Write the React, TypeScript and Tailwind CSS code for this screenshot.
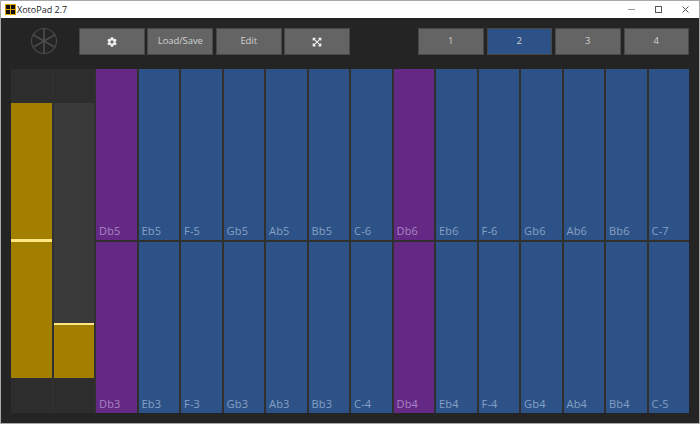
import React from 'react';
import { FaCog, FaExpandArrowsAlt } from 'react-icons/fa';

const topNotes = ['Db5', 'Eb5', 'F-5', 'Gb5', 'Ab5', 'Bb5', 'C-6', 'Db6', 'Eb6', 'F-6', 'Gb6', 'Ab6', 'Bb6', 'C-7'];
const bottomNotes = ['Db3', 'Eb3', 'F-3', 'Gb3', 'Ab3', 'Bb3', 'C-4', 'Db4', 'Eb4', 'F-4', 'Gb4', 'Ab4', 'Bb4', 'C-5'];

function ToolButton({ children, active }: { children: React.ReactNode; active?: boolean }) {
  return (
    <button
      className={`h-[27px] flex-1 flex items-center justify-center border border-[#474747] text-[9.5px] tracking-[-0.1px] text-[#d0d0d0] ${
        active ? 'bg-[#2d5288]' : 'bg-[#646464]'
      }`}
    >
      {children}
    </button>
  );
}

function Pad({ note }: { note: string }) {
  const purple = note.startsWith('Db');
  return (
    <div
      className={`flex items-end px-[3px] pb-[1px] text-[11px] leading-[16px] tracking-[0.2px] ${
        purple ? 'bg-[#642985] text-[#a884c2]' : 'bg-[#2d5288] text-[#86a0c4]'
      }`}
    >
      {note}
    </div>
  );
}

function Slider({ emptyHeight, lineClass }: { emptyHeight: number; lineClass: string }) {
  return (
    <div className="row-span-2 flex flex-col bg-[#2d2d2d]">
      <div className="h-[34px]" />
      <div className="h-[275px] flex flex-col bg-[#a37f00]">
        <div className="bg-[#3a3a3a]" style={{ height: emptyHeight }} />
        <div className={lineClass} />
      </div>
    </div>
  );
}

export default function App() {
  return (
    <div
      className="w-[700px] h-[424px] flex flex-col overflow-hidden border border-[#a8a8a8] bg-[#242424]"
      style={{ fontFamily: '"Open Sans", sans-serif' }}
    >
      {/* Title bar */}
      <div className="h-[17px] shrink-0 flex items-center bg-white pl-[4px] pr-[10px]">
        <svg width="11" height="11" viewBox="0 0 11 11" className="shrink-0">
          <rect width="11" height="11" fill="#e0a400" />
          <rect x="1" y="1" width="4" height="4" fill="#111" />
          <rect x="6" y="1" width="4" height="4" fill="#111" />
          <rect x="1" y="6" width="4" height="4" fill="#111" />
          <rect x="6" y="6" width="4" height="4" fill="#111" />
        </svg>
        <span className="ml-[1px] text-[9px] text-[#222]">XotoPad 2.7</span>
        <div className="ml-auto flex items-center gap-[20px]">
          <svg width="7" height="7" viewBox="0 0 7 7">
            <path d="M0 3.5H7" stroke="#999" strokeWidth="1" />
          </svg>
          <svg width="7" height="7" viewBox="0 0 7 7">
            <rect x="0.5" y="0.5" width="6" height="6" fill="none" stroke="#555" />
          </svg>
          <svg width="7" height="7" viewBox="0 0 7 7">
            <path d="M0.5 0.5L6.5 6.5M6.5 0.5L0.5 6.5" stroke="#555" />
          </svg>
        </div>
      </div>

      {/* Toolbar */}
      <div className="h-[51px] shrink-0 flex items-start pt-[10px] pl-[29px] pr-[10px]">
        <svg width="28" height="28" viewBox="0 0 28 28" className="shrink-0 -mt-[1px]">
          <circle cx="14" cy="14" r="12.5" fill="none" stroke="#4a4a4a" strokeWidth="1.2" />
          <path d="M14 2V26M3.6 8L24.4 20M3.6 20L24.4 8" stroke="#4a4a4a" strokeWidth="1.8" />
        </svg>
        <div className="w-[271px] ml-[21px] flex gap-[2.5px]">
          <ToolButton>
            <FaCog className="w-[10px] h-[10px] text-[#eee]" />
          </ToolButton>
          <ToolButton>Load/Save</ToolButton>
          <ToolButton>Edit</ToolButton>
          <ToolButton>
            <FaExpandArrowsAlt className="w-[10px] h-[10px] text-[#eee]" />
          </ToolButton>
        </div>
        <div className="w-[271px] ml-auto flex gap-[3px]">
          <ToolButton>1</ToolButton>
          <ToolButton active>2</ToolButton>
          <ToolButton>3</ToolButton>
          <ToolButton>4</ToolButton>
        </div>
      </div>

      {/* Pads and sliders */}
      <div className="h-[344px] mx-[10px] grid grid-cols-16 grid-rows-2 gap-[2px] bg-[#303030]">
        <Slider emptyHeight={0} lineClass="mt-[136px] h-[3px] bg-[#ffe680]" />
        <Slider emptyHeight={220} lineClass="h-[2px] bg-[#ffe680]" />
        {topNotes.map(note => (
          <Pad key={note} note={note} />
        ))}
        {bottomNotes.map(note => (
          <Pad key={note} note={note} />
        ))}
      </div>
    </div>
  );
}
